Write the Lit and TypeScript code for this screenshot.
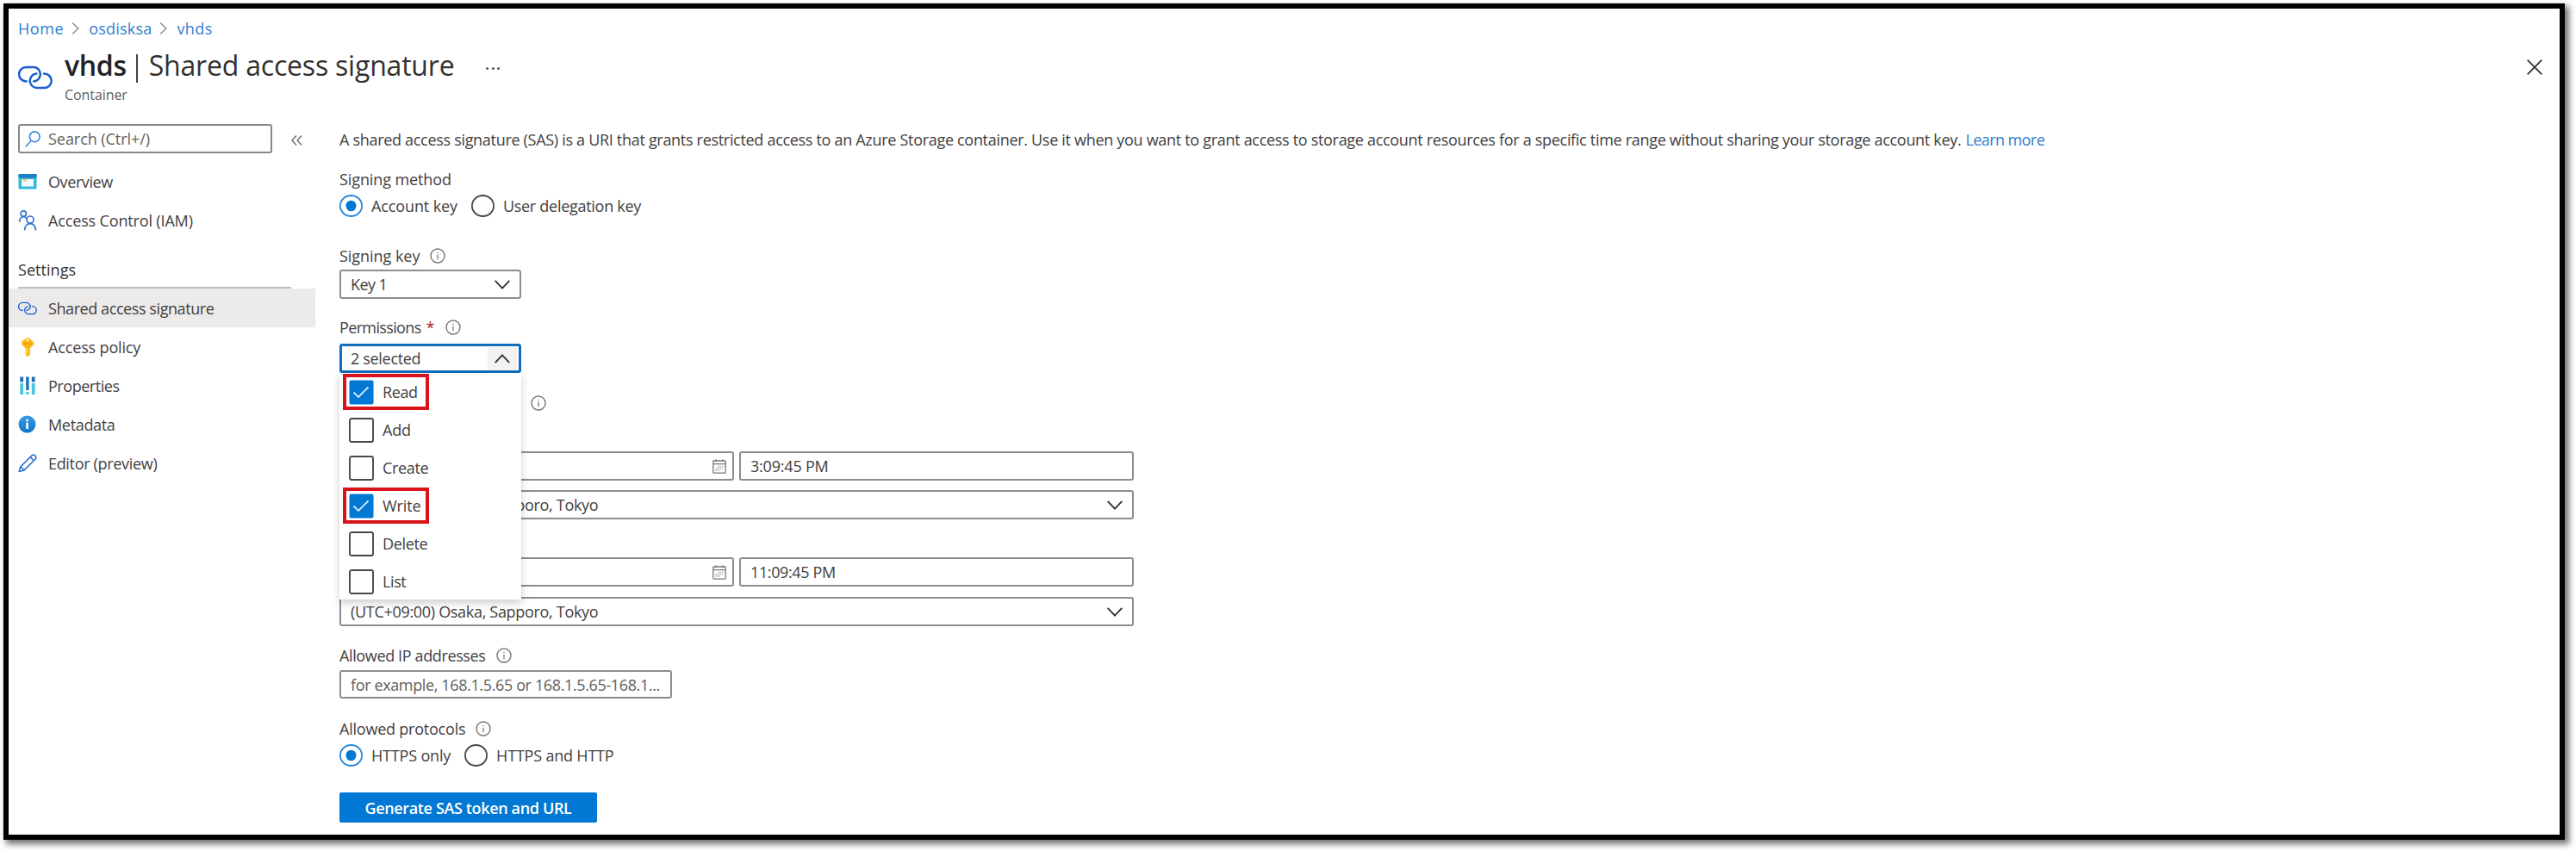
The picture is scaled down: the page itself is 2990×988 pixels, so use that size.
import { LitElement, html, css, svg, nothing } from "lit";
import { customElement } from "lit/decorators.js";
import { classMap } from "lit/directives/class-map.js";

const linkIcon = (cls: string) => html`<svg class=${cls} viewBox="0 0 40 28" fill="none" stroke="#1a5fd0" stroke-width="2.5" stroke-linecap="round">
  <path d="M9.8 18.4H9.3A8.2 8.2 0 0 1 9.3 2H17.8A8.2 8.2 0 0 1 24.6 14.4C23.2 16.8 21 18.2 18.2 18.4"/>
  <path d="M30 9.6H30.5A8.2 8.2 0 0 1 30.5 26H21.8A8.2 8.2 0 0 1 15 13.6C16.4 11.2 18.6 9.8 21.4 9.6"/>
</svg>`;

const icons: Record<string, unknown> = {
  overview: html`<svg class="ic" viewBox="0 0 22 22"><rect x="0.5" y="2" width="21" height="17.5" rx="1" fill="#35b8dc"/><rect x="0.5" y="2" width="21" height="4.5" fill="#1f7fc4"/><rect x="4" y="8" width="14" height="8.5" fill="#f1fafc"/><rect x="5.5" y="8" width="5" height="2.6" fill="#e8c98c"/></svg>`,
  people: html`<svg class="ic people" viewBox="0 0 22 26" fill="none" stroke="#2c72d4" stroke-width="1.8"><circle cx="5.8" cy="4.4" r="3.5"/><path d="M.8 14.8C.8 10.6 3 8.4 5.8 8.4 7.6 8.4 8.8 9.2 9.6 10.4"/><circle cx="14.2" cy="12" r="4.4"/><path d="M7.2 25.4C7.4 20 10.4 17 14.2 17 18.2 17 21 20 21.2 25.4"/></svg>`,
  link: linkIcon("ic"),
  key: html`<svg class="ic" viewBox="0 0 22 22"><path d="M11 0 17.3 4.6 18 6.6 17.6 8.2 13.6 12.2V20L11 22 8.9 20V12.2L4.6 8.2 4.1 6.6 4.7 4.6Z" fill="#fdb813" stroke="#fdb813" stroke-linejoin="round" stroke-width=".6"/><rect x="6.6" y="6.4" width="9" height="1.5" fill="#e69a00"/><circle cx="11" cy="3" r="1.3" fill="#fff"/><rect x="9.6" y="12.4" width="1.3" height="7" fill="#ffdc6e"/></svg>`,
  props: html`<svg class="ic" viewBox="0 0 22 22"><g fill="#45c8e6"><rect x="2.3" y="8" width="3.8" height="13"/><rect x="9.2" y="18" width="3.4" height="3"/><rect x="15.8" y="8" width="3.8" height="13"/></g><g fill="#1b72b8"><rect x="2.3" y="0.5" width="3.8" height="6"/><rect x="9.2" y="0.5" width="3.4" height="15.5"/><rect x="15.8" y="0.5" width="3.8" height="6"/></g></svg>`,
  info: html`<svg class="ic" viewBox="0 0 22 22"><defs><linearGradient id="g" x1="0" y1="0" x2="0" y2="1"><stop offset="0" stop-color="#3a9be6"/><stop offset="1" stop-color="#1274c8"/></linearGradient></defs><circle cx="10.5" cy="10.6" r="10" fill="url(#g)"/><circle cx="10.5" cy="6" r="1.4" fill="#fff"/><rect x="9.3" y="8.6" width="2.5" height="7.4" fill="#fff"/></svg>`,
  pencil: html`<svg class="ic" viewBox="0 0 22 22" fill="none" stroke="#2c6fd2" stroke-width="1.6" stroke-linejoin="round"><path d="M1.2 20.4 2.8 15 16 1.9C17 .9 18.6.9 19.7 1.9 21 3 21.2 4.8 20.1 6L7 18.9ZM14.2 3.7 18.2 7.8M2.8 15 7 18.9"/></svg>`,
};

const chevron = (up: boolean) => html`<svg class="chev" viewBox="0 0 18 11" fill="none" stroke="#333" stroke-width="1.9"><path d=${up ? "M.7 10.2 9 1.4 17.3 10.2" : "M.7 .8 9 9.6 17.3 .8"}/></svg>`;
const crumbSep = html`<svg class="sep" viewBox="0 0 9 14" fill="none" stroke="#8a8886" stroke-width="1.3"><path d="M1 .5 8 7 1 13.5"/></svg>`;
const hint = html`<svg class="hint" viewBox="0 0 18 18"><circle cx="9" cy="9" r="8" fill="none" stroke="#7a7876" stroke-width="1.4"/><rect x="8.3" y="7.8" width="1.4" height="5.4" fill="#8a8886"/><rect x="8.3" y="4.8" width="1.4" height="1.5" fill="#8a8886"/></svg>`;
const calendar = html`<svg class="cal" viewBox="0 0 16 17"><rect x=".8" y="2" width="14.4" height="14.2" rx="1" fill="none" stroke="#777" stroke-width="1.3"/><path d="M1 5.6H15M4 .2V3M12 .2V3" stroke="#777" stroke-width="1.3"/><path d="M6 8.5H13M3.6 10.8H12.4M3.4 13.1H9" stroke="#b0b0b0" stroke-width="1.5" stroke-dasharray="1.6 .9"/></svg>`;

const ZONE = "(UTC+09:00) Osaka, Sapporo, Tokyo";
const IP_HINT = "for example, 168.1.5.65 or 168.1.5.65-168.1...";
const INTRO = "A shared access signature (SAS) is a URI that grants restricted access to an Azure Storage container. Use it when you want to grant access to storage account resources for a specific time range without sharing your storage account key.";

/* Letter spacing of each string, in px; strings not listed use the default. */
const TRACKING: Record<string, number> = {
  Home: 0.6, osdisksa: 0.2, vhds: 0.4, Container: -0.08,
  "Search (Ctrl+/)": -0.05, Overview: -0.4, "Access Control (IAM)": -0.15, Settings: 0.05,
  "Shared access signature": -0.42, "Access policy": -0.15, Properties: -0.46, Metadata: -0.33, "Editor (preview)": -0.32,
  [INTRO]: -0.305, "Learn more": -0.58,
  "Signing method": -0.1, "Account key": -0.12, "User delegation key": -0.28, "Signing key": -0.04,
  "Key 1": -0.6, Permissions: -0.64, "2 selected": -0.32,
  Read: -0.4, Add: -0.2, Create: -0.33, Write: -0.1, Delete: -0.35, List: -0.4,
  "3:09:45 PM": -0.2, "11:09:45 PM": -0.38, [ZONE]: -0.31,
  "Allowed IP addresses": -0.37, [IP_HINT]: -0.37, "Allowed protocols": -0.22,
  "HTTPS only": -0.18, "HTTPS and HTTP": -0.2, "Generate SAS token and URL": -0.36,
};
const t = (text: string, tracking = TRACKING[text] ?? -0.3) => html`<span style="letter-spacing:${tracking}px">${text}</span>`;

@customElement("app-root")
export class AppRoot extends LitElement {
  static styles = css`
    :host { display: block; width: 2990px; height: 988px; box-sizing: border-box; padding: 4px 13px 13px 4px; background: #fff;
      font: 18px/24px "Open Sans", "Noto Sans", sans-serif; color: #42403f; overflow: hidden; white-space: nowrap; }
    * { box-sizing: border-box; }
    svg { display: block; flex: none; }
    .frame { height: 971px; border: 6px solid #000; background: #fff; box-shadow: 4px 4px 7px 1px rgba(0,0,0,.55); }
    .crumbs { display: flex; align-items: center; height: 24px; margin: 11px 0 0 11px; color: #2f7ed0; }
    .sep { width: 9px; height: 14px; margin: 0 11px 0 9px; }
    .head { display: flex; height: 78px; padding-left: 11px; }
    .big { width: 40px; height: 28px; margin: 31px 14px 0 0; }
    .title { display: flex; height: 44px; align-items: center; margin-top: 9px; font-size: 32px; color: #323130; }
    .title b { font-weight: 600; color: #222; }
    .bar { width: 2px; height: 33px; background: #444; margin: 6px 13px 0 11px; }
    .sub { font-size: 16px; line-height: 22px; color: #605e5c; margin-top: 1px; }
    .dots { display: flex; gap: 3.5px; margin: 33px 0 0 37px; }
    .dots i { width: 3px; height: 3px; border-radius: 50%; background: #555; }
    .close { width: 18px; height: 18px; margin: 24px 20px 0 auto; }
    .body { display: flex; margin-top: 11px; }
    .side { width: 384px; padding-top: 10px; flex: none; }
    .find { display: flex; align-items: center; }
    .search { display: flex; align-items: center; width: 295px; height: 34px; border: 2px solid #8a8886; border-radius: 3px; margin-left: 11px; color: #605e5c; }
    .lens { width: 18px; height: 19px; margin: 0 9px 0 6px; }
    .fold { width: 13px; height: 12px; margin: 3px 0 0 22px; }
    .item { display: flex; align-items: center; width: 356px; height: 45px; padding-left: 11px; }
    .item.first { margin-top: 10px; }
    .item.on { background: #edebe9; }
    .ic { width: 22px; height: 22px; margin-right: 13px; }
    .people { height: 24px; }
    .group { height: 57px; width: 317px; margin-left: 11px; padding-top: 23px; border-bottom: 2px solid #bebbb8; font-weight: 500; color: #323130; }
    .main { display: flex; flex-direction: column; align-items: flex-start; padding-top: 16px; }
    a { color: #2f7ed0; margin-left: 5px; }
    .lab { display: flex; align-items: center; height: 24px; }
    .lab .hint { margin: -1px 0 0 12px; }
    .hint { width: 18px; height: 18px; }
    .req { color: #a4262c; margin-left: 6px; font-style: normal; }
    .radios { display: flex; height: 26px; align-items: center; }
    .radio { width: 27px; height: 26px; margin-right: 10px; }
    .radios span { margin-right: 16px; }
    .box { display: flex; align-items: center; justify-content: space-between; height: 34px; border: 2px solid #8f8d8b; border-radius: 3px; padding: 0 11px; background: #fff; }
    .small { width: 211px; }
    .wide { width: 922px; }
    .half { width: 458px; }
    .half .cal { margin-right: -4px; }
    .ip { width: 386px; height: 33px; color: #605e5c; }
    .cal { width: 16px; height: 17px; }
    .chev { width: 18px; height: 11px; }
    .pair { display: flex; gap: 6px; }
    .open { border: 3px solid #106ebe; padding: 0 2px 0 10px; }
    .toggle { display: grid; place-items: center; width: 34px; height: 26px; background: #f3f2f1; }
    .picker { position: relative; }
    .menu { position: absolute; z-index: 2; left: 0; top: 34px; width: 211px; height: 263px; background: #fff; box-shadow: 0 4px 9px rgba(0,0,0,.2); padding-top: 1px; }
    .opt { display: flex; align-items: center; width: 100px; height: 42px; margin: 0 0 2px 4px; padding-left: 7px; }
    .opt.mark { border: 4px solid #d8131c; padding-left: 3px; }
    .check { width: 29px; height: 29px; margin-right: 10px; }
    .m4 { margin-top: 4px; } .m5 { margin-top: 5px; } .m6 { margin-top: 6px; } .m7 { margin-top: 7px; }
    .m11 { margin-top: 11px; } .m12 { margin-top: 12px; } .m21 { margin-top: 21px; } .m22 { margin-top: 22px; }
    .m23 { margin-top: 23px; } .m30 { margin-top: 30px; } .m33 { margin-top: 33px; } .m44 { margin-top: 44px; }
    .range { padding-left: 210px; }
    .go { display: grid; place-items: center; width: 299px; height: 35px; background: #0078d4; color: #fff; border-radius: 2px; font-weight: 600; }
  `;

  item(icon: string, text: string, cls = "") {
    return html`<div class="item ${cls}">${icons[icon]}${t(text)}</div>`;
  }
  radio(text: string, on: boolean) {
    return html`<svg class="radio" viewBox="0 0 27 26"><ellipse cx="13.5" cy="13" rx="12.6" ry="12" fill="none" stroke=${on ? "#2a88d8" : "#4a4846"} stroke-width="1.8"/>${on ? svg`<ellipse cx="13.5" cy="13" rx="6" ry="6.3" fill="#0078d4"/>` : nothing}</svg>${t(text)}`;
  }
  option(text: string, on: boolean) {
    return html`<div class=${classMap({ opt: true, mark: on })}><svg class="check" viewBox="0 0 29 29">${on
      ? svg`<rect x=".5" y=".5" width="28" height="28" rx="2" fill="#0078d4"/><path d="M5.5 14.5 11 20 22.5 8.5" fill="none" stroke="#d4e8f8" stroke-width="1.8"/>`
      : svg`<rect x="1" y="1" width="27" height="27" rx="2" fill="#fff" stroke="#4a4846" stroke-width="1.9"/>`}</svg>${t(text)}</div>`;
  }
  period(time: string, gap: string) {
    return html`<div class="pair m44"><div class="box half"><i></i>${calendar}</div><div class="box half">${t(time)}</div></div>
      <div class="box wide ${gap}">${t(ZONE)}${chevron(false)}</div>`;
  }

  render() {
    return html`<div class="frame">
      <div class="crumbs">${t("Home")}${crumbSep}${t("osdisksa")}${crumbSep}${t("vhds")}</div>
      <div class="head">
        ${linkIcon("big")}
        <div><div class="title"><b>${t("vhds", -0.3)}</b><i class="bar"></i>${t("Shared access signature", -0.2)}</div><div class="sub">${t("Container")}</div></div>
        <div class="dots"><i></i><i></i><i></i></div>
        <svg class="close" viewBox="0 0 18 18" stroke="#333" stroke-width="1.8"><path d="M.7 .7 17.3 17.3M17.3 .7 .7 17.3"/></svg>
      </div>
      <div class="body">
        <div class="side">
          <div class="find"><div class="search"><svg class="lens" viewBox="0 0 18 19" fill="none" stroke="#3a8ad8" stroke-width="1.6"><circle cx="11.2" cy="6.8" r="5.9"/><path d="M7.2 11.2 .8 18.2"/></svg>${t("Search (Ctrl+/)")}</div>
            <svg class="fold" viewBox="0 0 13 12" fill="none" stroke="#666" stroke-width="1.3"><path d="M6 .5 1 6 6 11.5M12 .5 7 6 12 11.5"/></svg></div>
          ${this.item("overview", "Overview", "first")}
          ${this.item("people", "Access Control (IAM)")}
          <div class="group">${t("Settings")}</div>
          ${this.item("link", "Shared access signature", "on")}
          ${this.item("key", "Access policy")}
          ${this.item("props", "Properties")}
          ${this.item("info", "Metadata")}
          ${this.item("pencil", "Editor (preview)")}
        </div>
        <div class="main">
          <div class="lab">${t(INTRO)}<a>${t("Learn more")}</a></div>
          <div class="lab m22">${t("Signing method")}</div>
          <div class="radios m6">${this.radio("Account key", true)}${this.radio("User delegation key", false)}</div>
          <div class="lab m33">${t("Signing key")}${hint}</div>
          <div class="box small m4">${t("Key 1")}${chevron(false)}</div>
          <div class="lab m21">${t("Permissions")}<i class="req">*</i>${hint}</div>
          <div class="picker m7">
            <div class="box small open">${t("2 selected")}<div class="toggle">${chevron(true)}</div></div>
            <div class="menu">${this.option("Read", true)}${this.option("Add", false)}${this.option("Create", false)}${this.option("Write", true)}${this.option("Delete", false)}${this.option("List", false)}</div>
          </div>
          <div class="lab range m23">${hint}</div>
          ${this.period("3:09:45 PM", "m11")}
          ${this.period("11:09:45 PM", "m12")}
          <div class="lab m22">${t("Allowed IP addresses")}${hint}</div>
          <div class="box ip m5">${t(IP_HINT)}</div>
          <div class="lab m23">${t("Allowed protocols")}${hint}</div>
          <div class="radios m6">${this.radio("HTTPS only", true)}${this.radio("HTTPS and HTTP", false)}</div>
          <div class="go m30">${t("Generate SAS token and URL")}</div>
        </div>
      </div>
    </div>`;
  }
}
